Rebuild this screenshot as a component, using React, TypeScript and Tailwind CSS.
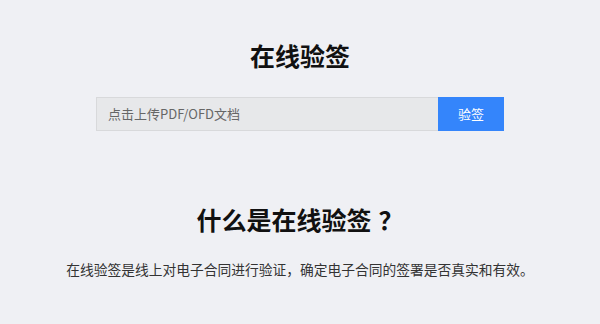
import React from 'react';

const font = { fontFamily: '"Noto Sans CJK SC", "Noto Sans", sans-serif' };

const App: React.FC = () => {
  return (
    <div
      className="min-h-screen w-full bg-[#eff0f4] flex flex-col items-center pt-[36px] [text-spacing-trim:space-all]"
      style={font}
    >
      <h1 className="text-[25px] font-bold leading-[38px] text-[#111]">在线验签</h1>

      <div className="mt-[23px] flex h-[34px] w-[408px]">
        <div className="flex-1 flex items-center px-[11px] bg-[#e7e8ea] border border-[#d8d9db] border-r-0 text-[13px] text-[#666]">
          点击上传PDF/OFD文档
        </div>
        <button className="w-[66px] h-full bg-[#3485fb] text-white text-[13px]">验签</button>
      </div>

      <h2 className="mt-[69px] text-[25px] font-bold leading-[38px] text-[#111]">
        什么是在线验签<span className="ml-[7px]">？</span>
      </h2>

      <p className="mt-[20px] text-[13.75px] leading-[22px] text-[#333]">
        在线验签是线上对电子合同进行验证，确定电子合同的签署是否真实和有效。
      </p>
    </div>
  );
};

export default App;
